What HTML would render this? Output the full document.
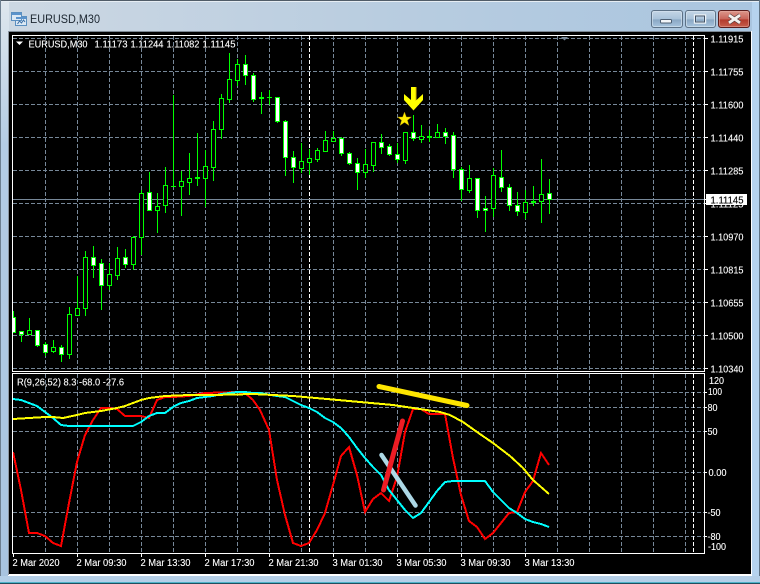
<!DOCTYPE html>
<html lang="en"><head><meta charset="utf-8"><title>EURUSD,M30</title>
<style>
html,body{margin:0;padding:0;width:760px;height:584px;overflow:hidden;background:#a9c6e0}
svg{display:block;position:absolute;left:0;top:0}
text{font-family:"Liberation Sans",sans-serif;font-size:10.5px;fill:#fff;stroke:#fff;stroke-width:.12}
</style></head><body>
<svg width="760" height="584" viewBox="0 0 760 584" xmlns="http://www.w3.org/2000/svg">
<defs>
<linearGradient id="tb" x1="0" x2="1" y1="0" y2="0"><stop offset="0" stop-color="#cdd8e3"/><stop offset=".5" stop-color="#b9cde0"/><stop offset="1" stop-color="#a9c5df"/></linearGradient>
<linearGradient id="lb" x1="0" x2="0" y1="0" y2="1"><stop offset="0" stop-color="#dfe7ee"/><stop offset=".25" stop-color="#b4cce4"/><stop offset="1" stop-color="#a8c4e0"/></linearGradient>
<linearGradient id="btn" x1="0" x2="0" y1="0" y2="1"><stop offset="0" stop-color="#c5d6e6"/><stop offset=".5" stop-color="#a9c3da"/><stop offset=".55" stop-color="#8aa8c4"/><stop offset="1" stop-color="#a9c6e0"/></linearGradient>
<linearGradient id="cls" x1="0" x2="0" y1="0" y2="1"><stop offset="0" stop-color="#dd9a8e"/><stop offset=".5" stop-color="#c9655a"/><stop offset=".55" stop-color="#b23a2c"/><stop offset="1" stop-color="#c8604e"/></linearGradient>
<clipPath id="mc"><rect x="13" y="36" width="691" height="335"/></clipPath>
<clipPath id="sc"><rect x="13" y="374" width="691" height="179"/></clipPath>
</defs>
<!-- frame -->
<rect width="760" height="584" fill="#a9c6e0"/>
<rect x="0" y="0" width="760" height="32" fill="url(#tb)"/>
<rect x="0" y="0" width="9" height="584" fill="url(#lb)"/>
<rect x="752" y="0" width="8" height="584" fill="#b6d3ee"/>
<rect x="0" y="0" width="760" height="1" fill="#505c68"/>
<rect x="1" y="1" width="758" height="1" fill="#e6edf3"/>
<rect x="0" y="0" width="1" height="584" fill="#6d7f90"/>
<rect x="759" y="0" width="1" height="584" fill="#5f7384"/>
<rect x="0" y="576" width="760" height="6" fill="#b4cfe8"/>
<rect x="0" y="582" width="760" height="1" fill="#4fb3c9"/>
<rect x="0" y="583" width="760" height="1" fill="#1f4f5f"/>
<!-- client -->
<rect x="8" y="31" width="744" height="545" fill="#fff"/>
<rect x="8" y="31" width="743" height="1" fill="#7c8894"/>
<rect x="8" y="31" width="1" height="544" fill="#8b95a0"/>
<rect x="9" y="32" width="742" height="542" fill="#000"/>
<!-- title -->
<g>
<rect x="15.5" y="16.5" width="11" height="9" fill="#dbe8f4" stroke="#5b8fc0"/>
<rect x="11.5" y="12.5" width="10" height="8" fill="#dbe8f4" stroke="#5b8fc0"/>
<rect x="12" y="13" width="9" height="2" fill="#5b93cc"/>
<rect x="16" y="17" width="10" height="2" fill="#5b93cc"/>
<path d="M17.5 24l2-3 2 2 2-3 1.500 2" fill="none" stroke="#3a6ea5"/>
</g>
<text x="30" y="23" style="font-size:11.5px;fill:#1c2630;stroke:none" textLength="70" lengthAdjust="spacingAndGlyphs">EURUSD,M30</text>
<!-- buttons -->
<rect x="651.500" y="10.500" width="31" height="17" rx="2.500" fill="url(#btn)" stroke="#5c7186"/>
<rect x="652.500" y="11.500" width="29" height="15" rx="2" fill="none" stroke="#dbe6f0" stroke-opacity=".6"/>
<rect x="660.500" y="19.500" width="11" height="3.500" rx="1" fill="#f3f6f9" stroke="#4f6073"/>
<rect x="685.500" y="10.500" width="30" height="17" rx="2.500" fill="url(#btn)" stroke="#5c7186"/>
<rect x="686.500" y="11.500" width="28" height="15" rx="2" fill="none" stroke="#dbe6f0" stroke-opacity=".6"/>
<rect x="695" y="15.500" width="10" height="7" fill="none" stroke="#eef3f7" stroke-width="2.400"/>
<rect x="695.500" y="16" width="9" height="6" fill="none" stroke="#3f5064" stroke-width="1"/>
<rect x="718.500" y="10.500" width="31" height="17" rx="2.500" fill="url(#cls)" stroke="#5a1c1c"/>
<rect x="719.500" y="11.500" width="29" height="15" rx="2" fill="none" stroke="#e8b0a8" stroke-opacity=".5"/>
<path d="M729 15.200l11 7.600M740 15.200l-11 7.600" stroke="#4c3a3a" stroke-width="4" fill="none"/>
<path d="M729 15.200l11 7.600M740 15.200l-11 7.600" stroke="#f4f0ee" stroke-width="2.800" fill="none"/>
<!-- grid main -->
<g shape-rendering="crispEdges" fill="none">
<g stroke="#778899" stroke-dasharray="4 2">
<path d="M13 38.500H704M13 71.500H704M13 104.500H704M13 137.500H704M13 170.500H704M13 203.500H704M13 236.500H704M13 269.500H704M13 302.500H704M13 335.500H704M13 368.500H704"/>
<path d="M45.500 36V371M77.500 36V371M109.500 36V371M141.500 36V371M173.500 36V371M205.500 36V371M237.500 36V371M269.500 36V371M301.500 36V371M333.500 36V371M365.500 36V371M397.500 36V371M429.500 36V371M461.500 36V371M493.500 36V371M525.500 36V371M557.500 36V371M589.500 36V371M621.500 36V371M653.500 36V371M685.500 36V371"/>
<path d="M13 392.500H704M13 407.500H704M13 431.500H704M13 472.500H704M13 512.500H704M13 536.500H704"/>
<path d="M45.500 374V553M77.500 374V553M109.500 374V553M141.500 374V553M173.500 374V553M205.500 374V553M237.500 374V553M269.500 374V553M301.500 374V553M333.500 374V553M365.500 374V553M397.500 374V553M429.500 374V553M461.500 374V553M493.500 374V553M525.500 374V553M557.500 374V553M589.500 374V553M621.500 374V553M653.500 374V553M685.500 374V553"/>
</g>
<path d="M309.500 36V371M693.500 36V371M309.500 374V553M693.500 374V553" stroke="#fff" stroke-dasharray="4 2"/>
<path d="M13 199.500H704" stroke="#778899"/>
<!-- candles -->
<g clip-path="url(#mc)">
<path stroke="#00ff00" d="M13.500 311V333M21.500 331V342M29.500 318V333M37.500 330V347M45.500 342V356M53.500 340V353M61.500 345V362M69.500 307V359M77.500 276V315M85.500 251V316M93.500 246V278M101.500 259V310M109.500 263V290M117.500 247V280M125.500 249V268M133.500 236V270M141.500 190V255M149.500 172V211M157.500 193V233M165.500 167V213M173.500 95V187M181.500 171V216M189.500 153V195M197.500 133V186M205.500 150V207M213.500 121V181M221.500 94V139M229.500 53V103M237.500 59V86M245.500 55V85M253.500 73V102M261.500 92V114M269.500 90V105M277.500 97V123M285.500 120V176M293.500 151V183M301.500 143V173M309.500 149V175M317.500 148V162M325.500 131V152M333.500 131V141M341.500 137V156M349.500 152V165M357.500 158V190M365.500 149V178M373.500 142V172M381.500 134V154M389.500 144V156M397.500 143V163M405.500 132V164M413.500 115V141M421.500 125V143M429.500 130V142M437.500 124V137M445.500 128V144M453.500 132V178M461.500 167V201M469.500 165V193M477.500 178V218M485.500 196V232M493.500 168V217M501.500 150V192M509.500 184V211M517.500 192V216M525.500 190V219M533.500 186V206M541.500 159V223M549.500 179V214"/>
<path stroke="#00ff00" fill="#fff" d="M11.500 317.500h4v15h-4zM19.500 331.500h4v3h-4zM35.500 330.500h4v15h-4zM43.500 344.500h4v8h-4zM59.500 347.500h4v7h-4zM91.500 257.500h4v8h-4zM99.500 263.500h4v22h-4zM123.500 257.500h4v7h-4zM147.500 192.500h4v18h-4zM243.500 64.500h4v11h-4zM251.500 75.500h4v24h-4zM275.500 97.500h4v24h-4zM283.500 121.500h4v36h-4zM291.500 157.500h4v10h-4zM339.500 138.500h4v15h-4zM347.500 153.500h4v10h-4zM355.500 163.500h4v9h-4zM379.500 142.500h4v5h-4zM387.500 146.500h4v8h-4zM395.500 154.500h4v5h-4zM411.500 132.500h4v6h-4zM443.500 132.500h4v4h-4zM451.500 135.500h4v34h-4zM459.500 169.500h4v20h-4zM475.500 178.500h4v32h-4zM483.500 208.500h4v2h-4zM499.500 177.500h4v10h-4zM507.500 187.500h4v18h-4zM515.500 205.500h4v6h-4zM547.500 193.500h4v6h-4z"/>
<path stroke="#00ff00" fill="#000" d="M27.500 330.500h4v4h-4zM51.500 347.500h4v4h-4zM67.500 314.500h4v40h-4zM75.500 308.500h4v7h-4zM83.500 257.500h4v51h-4zM107.500 274.500h4v11h-4zM115.500 258.500h4v17h-4zM131.500 237.500h4v27h-4zM139.500 193.500h4v44h-4zM155.500 206.500h4v4h-4zM163.500 185.500h4v20h-4zM179.500 181.500h4v5h-4zM187.500 178.500h4v4h-4zM203.500 166.500h4v12h-4zM211.500 129.500h4v38h-4zM219.500 98.500h4v31h-4zM227.500 79.500h4v20h-4zM235.500 64.500h4v16h-4zM299.500 161.500h4v7h-4zM307.500 158.500h4v4h-4zM315.500 150.500h4v9h-4zM323.500 140.500h4v11h-4zM331.500 138.500h4v3h-4zM363.500 164.500h4v8h-4zM371.500 142.500h4v23h-4zM403.500 132.500h4v28h-4zM419.500 136.500h4v3h-4zM435.500 132.500h4v5h-4zM467.500 178.500h4v12h-4zM491.500 175.500h4v33h-4zM523.500 202.500h4v10h-4zM539.500 194.500h4v7h-4z"/>
<path fill="#00ff00" stroke="none" d="M195 177h5v2h-5zM259 97h5v2h-5zM427 136h5v2h-5zM531 201h5v2h-5zM171 186h5v1h-5zM267 97h5v1h-5z"/>
</g>
<!-- frames and ticks -->
<path stroke="#fff" d="M12.500 35.500H704.500V371.500H12.500ZM12.500 373.500H704.500V553.500H12.500Z"/>
<path stroke="#fff" d="M705 38.500h3M705 71.500h3M705 104.500h3M705 137.500h3M705 170.500h3M705 203.500h3M705 236.500h3M705 269.500h3M705 302.500h3M705 335.500h3M705 368.500h3M705 392.500h2M705 407.500h2M705 431.500h2M705 472.500h2M705 512.500h2M705 536.500h2M13.500 554v3M77.500 554v3M141.500 554v3M205.500 554v3M269.500 554v3M333.500 554v3M397.500 554v3M461.500 554v3M525.500 554v3"/>
</g>
<path d="M561 37h7l-3.500 3.500z" fill="#778899"/>
<path d="M16 41.500h7l-3.500 3.500z" fill="#fff"/>
<!-- indicator lines -->
<g clip-path="url(#sc)" fill="none">
<g shape-rendering="crispEdges" stroke-width="2">
<path stroke="#ff0000" d="M13 452L21 490L29 533L37 533L45 536L53 543L61 546L69 503L77 462L85 435L93 420L101 408L109 408L117 409L125 416L133 416L141 416L149 418L157 400L165 397L173 397L189 396L205 393L237 392L245 393L253 400L260 410L269 430L277 480L285 515L293 543L301 546L309 543L317 530L325 513L333 485L341 456L349 447L357 475L365 512L373 499L381 493L389 501L397 477L405 432L413 409L421 409L429 414L437 414L445 414L453 458L461 495L469 521L477 527L485 539L493 533L501 523L509 513L517 512L525 492L533 481L541 453L549 465"/>
<path stroke="#00ffff" d="M13 399L21 400L29 403L37 406L45 412L53 418L61 425L69 426L133 426L141 422L149 416L157 413L165 413L173 407L181 403L189 401L197 398L205 397L213 396L221 394L229 393L237 392L245 392L253 393L260 393L277 396L285 397L293 401L301 405L309 408L317 412L325 418L333 422L341 428L349 437L357 448L365 458L373 467L381 475L389 490L397 500L405 510L413 518L421 513L429 502L437 491L445 482L453 481L485 481L493 492L501 500L509 508L517 513L525 519L533 522L541 524L549 527"/>
<path stroke="#ffff00" d="M13 419L29 418L45 417L53 417L63 418L77 415L85 413L101 411L117 408L125 406L133 403L141 400L149 398L165 396L189 395L213 395L253 394L293 396L327 399L360 402L393 405L413 408L440 412L450 415L463 422L477 432L493 443L510 456L523 468L533 480L549 494"/>
</g>
<path stroke="#ffe600" stroke-width="5" stroke-linecap="round" d="M379 386.500L467 405.500"/>
<path stroke="#add8e6" stroke-width="4.500" stroke-linecap="round" d="M381.500 455L415.500 505.500"/>
<path stroke="#ed1c24" stroke-width="5" stroke-linecap="round" d="M402.500 421L383.500 490"/>
</g>
<!-- arrow & star -->
<path fill="#ffff00" d="M411 87h5.500v13l6.500-6v6l-9.500 10.500L404 100v-6l7 6z"/>
<path fill="#d9b800" d="M415.500 87h1v13l-1 1z"/>
<path fill="#ffee00" stroke="#a08000" stroke-width=".4" d="M404.500 112l1.900 5h5.100l-4.100 3.300 1.600 5.200-4.500-3.100-4.500 3.100 1.600-5.200-4.100-3.300h5.100z"/>
<!-- texts -->
<text x="28.500" y="47.500" textLength="59" lengthAdjust="spacingAndGlyphs">EURUSD,M30</text>
<text x="94.500" y="47.500" textLength="33" lengthAdjust="spacingAndGlyphs">1.11173</text>
<text x="130.500" y="47.500" textLength="33" lengthAdjust="spacingAndGlyphs">1.11244</text>
<text x="166.500" y="47.500" textLength="33" lengthAdjust="spacingAndGlyphs">1.11082</text>
<text x="202.500" y="47.500" textLength="33" lengthAdjust="spacingAndGlyphs">1.11145</text>
<text x="17" y="385.500" textLength="107" lengthAdjust="spacingAndGlyphs">R(9,26,52) 8.3 -68.0 -27.6</text>
<g>
<text x="710.500" y="42.500" textLength="33" lengthAdjust="spacingAndGlyphs">1.11915</text>
<text x="710.500" y="75.500" textLength="33" lengthAdjust="spacingAndGlyphs">1.11755</text>
<text x="710.500" y="108.500" textLength="33" lengthAdjust="spacingAndGlyphs">1.11600</text>
<text x="710.500" y="141.500" textLength="33" lengthAdjust="spacingAndGlyphs">1.11440</text>
<text x="710.500" y="174.500" textLength="33" lengthAdjust="spacingAndGlyphs">1.11285</text>
<text x="710.500" y="207.500" textLength="33" lengthAdjust="spacingAndGlyphs">1.11125</text>
<text x="710.500" y="240.500" textLength="33" lengthAdjust="spacingAndGlyphs">1.10970</text>
<text x="710.500" y="273.500" textLength="33" lengthAdjust="spacingAndGlyphs">1.10815</text>
<text x="710.500" y="306.500" textLength="33" lengthAdjust="spacingAndGlyphs">1.10655</text>
<text x="710.500" y="339.500" textLength="33" lengthAdjust="spacingAndGlyphs">1.10500</text>
<text x="710.500" y="372.500" textLength="33" lengthAdjust="spacingAndGlyphs">1.10340</text>
</g>
<rect x="706" y="194" width="41" height="11" fill="#fff"/>
<path d="M704 199.500h3" stroke="#fff" shape-rendering="crispEdges"/>
<text x="710.500" y="203.500" style="fill:#000;stroke:#000" textLength="33" lengthAdjust="spacingAndGlyphs">1.11145</text>
<g>
<text x="709" y="384" textLength="15" lengthAdjust="spacingAndGlyphs">120</text>
<text x="708" y="395" textLength="14" lengthAdjust="spacingAndGlyphs">100</text>
<text x="707.500" y="411" textLength="10" lengthAdjust="spacingAndGlyphs">80</text>
<text x="707.500" y="435" textLength="10" lengthAdjust="spacingAndGlyphs">50</text>
<text x="708.500" y="476" textLength="18" lengthAdjust="spacingAndGlyphs">0.00</text>
<text x="707.500" y="516" textLength="13" lengthAdjust="spacingAndGlyphs">-50</text>
<text x="707.500" y="540" textLength="13" lengthAdjust="spacingAndGlyphs">-80</text>
<text x="708" y="550" textLength="18" lengthAdjust="spacingAndGlyphs">-100</text>
</g>
<g>
<text x="12.500" y="566" textLength="47" lengthAdjust="spacingAndGlyphs">2 Mar 2020</text>
<text x="76.500" y="566" textLength="50" lengthAdjust="spacingAndGlyphs">2 Mar 09:30</text>
<text x="140.500" y="566" textLength="50" lengthAdjust="spacingAndGlyphs">2 Mar 13:30</text>
<text x="204.500" y="566" textLength="50" lengthAdjust="spacingAndGlyphs">2 Mar 17:30</text>
<text x="268.500" y="566" textLength="50" lengthAdjust="spacingAndGlyphs">2 Mar 21:30</text>
<text x="332.500" y="566" textLength="50" lengthAdjust="spacingAndGlyphs">3 Mar 01:30</text>
<text x="396.500" y="566" textLength="50" lengthAdjust="spacingAndGlyphs">3 Mar 05:30</text>
<text x="460.500" y="566" textLength="50" lengthAdjust="spacingAndGlyphs">3 Mar 09:30</text>
<text x="524.500" y="566" textLength="50" lengthAdjust="spacingAndGlyphs">3 Mar 13:30</text>
</g>
</svg>
</body></html>
